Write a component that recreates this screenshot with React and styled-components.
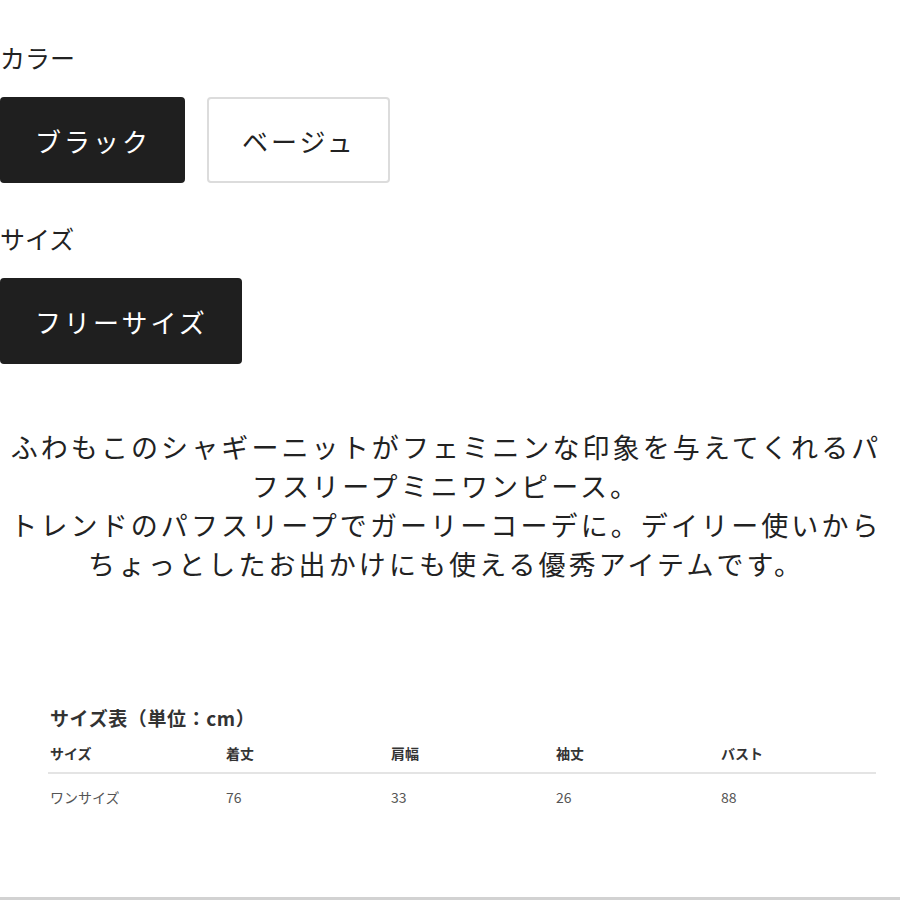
import styled, {createGlobalStyle} from 'styled-components'

const COLUMNS = ['サイズ', '着丈', '肩幅', '袖丈', 'バスト']
const ROWS = [
  {id: 'one', cells: ['ワンサイズ', '76', '33', '26', '88']},
]

const GlobalStyle = createGlobalStyle`
  html, body {
    margin: 0;
    padding: 0;
    background: #ffffff;
  }
  body {
    font-family: "Noto Sans CJK JP", "Noto Sans", sans-serif;
    color: #222222;
  }
`

const App = () => {
  return (
    <Page>
      <GlobalStyle />
      <Label>カラー</Label>
      <Options>
        <Option $selected>ブラック</Option>
        <Option>ベージュ</Option>
      </Options>
      <Label $spaced>サイズ</Label>
      <Options>
        <Option $selected>フリーサイズ</Option>
      </Options>
      <Description>
        ふわもこのシャギーニットがフェミニンな印象を与えてくれるパフスリープミニワンピース。
        <br />
        トレンドのパフスリープでガーリーコーデに。デイリー使いから
        <br />
        ちょっとしたお出かけにも使える優秀アイテムです。
      </Description>
      <SizeChart>
        <ChartTitle>サイズ表（単位：cm）</ChartTitle>
        <Table>
          <colgroup>
            <Col $w={176} />
            <Col $w={165} />
            <Col $w={165} />
            <Col $w={165} />
            <col />
          </colgroup>
          <thead>
            <tr>
              {COLUMNS.map(col => <Th key={col}>{col}</Th>)}
            </tr>
          </thead>
          <tbody>
            {
              ROWS.map(row => (
                <tr key={row.id}>
                  {row.cells.map((cell, i) => <Td key={i}>{cell}</Td>)}
                </tr>
              ))
            }
          </tbody>
        </Table>
      </SizeChart>
    </Page>
  )
}

const Page = styled.div`
  height: 900px;
  box-sizing: border-box;
  padding-top: 39px;
  border-bottom: 3px solid #d2d2d2;
  overflow: hidden;
`

const Label = styled.div`
  font-size: 25px;
  line-height: 37px;
  color: #222;
  margin-top: ${p => p.$spaced ? '37px' : '0'};
`

const Options = styled.div`
  display: flex;
  gap: 22px;
  margin-top: 21px;
`

const Option = styled.div`
  box-sizing: border-box;
  height: 86px;
  padding: 0 32px 0 33px;
  display: flex;
  align-items: center;
  justify-content: center;
  font-size: 26px;
  letter-spacing: 3px;
  border-radius: 4px;
  background: ${p => p.$selected ? '#1f1f1f' : '#ffffff'};
  color: ${p => p.$selected ? '#ffffff' : '#222222'};
  border: 2px solid ${p => p.$selected ? '#1f1f1f' : '#dcdcdc'};
`

const Description = styled.p`
  width: 884px;
  margin: 63px auto 0;
  padding-right: 8px;
  box-sizing: border-box;
  text-align: center;
  font-size: 27px;
  line-height: 39px;
  letter-spacing: 3.1px;
  color: #222;
`

const SizeChart = styled.div`
  margin: 121px 24px 0 48px;
`

const ChartTitle = styled.div`
  font-size: 19px;
  line-height: 28px;
  font-weight: 700;
  color: #333;
  padding-left: 2px;
  letter-spacing: 0.6px;
`

const Table = styled.table`
  width: 100%;
  border-collapse: collapse;
  table-layout: fixed;
  margin-top: 11px;
`

const Col = styled.col`
  width: ${p => p.$w}px;
`

const Th = styled.th`
  text-align: left;
  font-size: 14px;
  line-height: 20px;
  font-weight: 700;
  color: #333;
  padding: 0 0 9px 2px;
  border-bottom: 2px solid #e4e4e4;
`

const Td = styled.td`
  font-size: 14px;
  line-height: 20px;
  color: #555;
  padding: 13px 0 0 2px;
`

export default App
